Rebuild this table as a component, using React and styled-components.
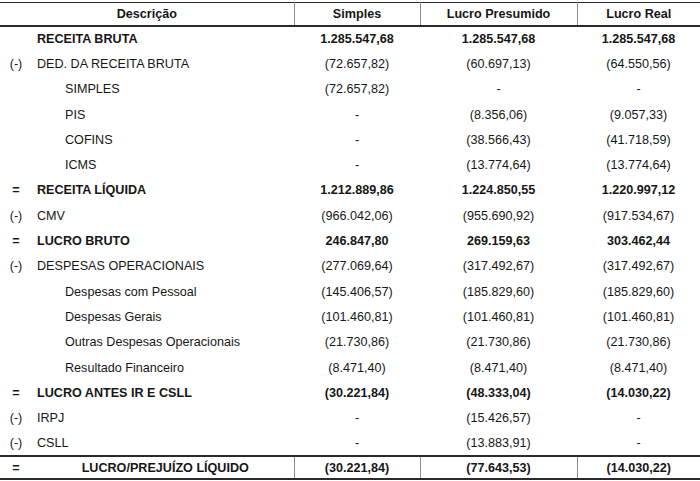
import React from "react";
import styled, { createGlobalStyle } from "styled-components";

const Global = createGlobalStyle`
  html, body { margin: 0; padding: 0; background: #fff; }
  body { font-family: "Liberation Sans", Arial, sans-serif; color: #161616; }
`;

const Page = styled.div`
  width: 700px;
  padding-top: 2px;
`;

const Table = styled.table`
  width: 700px;
  border-collapse: collapse;
  table-layout: fixed;
  font-size: 12.6px;
`;

const HeadRow = styled.tr`
  height: 23px;
  border-top: 1px solid #2a2a2a;
  border-bottom: 2px solid #2a2a2a;
`;

const HeadCell = styled.th`
  font-weight: bold;
  text-align: center;
  padding: 1px 0 0;
  border-left: ${(p) => (p.$sep ? "1px solid #8a8a8a" : "none")};
`;

const Row = styled.tr`
  height: 25.3px;
`;

const TotalRow = styled.tr`
  height: 23px;
  border-top: 2px solid #2a2a2a;
  border-bottom: 2px solid #2a2a2a;
`;

const SignCell = styled.td`
  text-align: center;
  padding: 1px 0 0;
  font-weight: ${(p) => (p.$eq ? "bold" : "normal")};
`;

const DescCell = styled.td`
  padding: 1px 0 0 ${(p) => (p.$indent ? "33px" : "5px")};
  font-weight: ${(p) => (p.$bold ? "bold" : "normal")};
  text-align: ${(p) => (p.$center ? "center" : "left")};
  white-space: nowrap;
`;

const ValueCell = styled.td`
  text-align: center;
  padding: 1px 0 0;
  font-weight: ${(p) => (p.$bold ? "bold" : "normal")};
  border-left: ${(p) => (p.$sep ? "1px solid #8a8a8a" : "none")};
`;

const rows = [
  { sign: "", desc: "RECEITA BRUTA", bold: true, v: ["1.285.547,68", "1.285.547,68", "1.285.547,68"] },
  { sign: "(-)", desc: "DED. DA RECEITA BRUTA", v: ["(72.657,82)", "(60.697,13)", "(64.550,56)"] },
  { sign: "", indent: true, desc: "SIMPLES", v: ["(72.657,82)", "-", "-"] },
  { sign: "", indent: true, desc: "PIS", v: ["-", "(8.356,06)", "(9.057,33)"] },
  { sign: "", indent: true, desc: "COFINS", v: ["-", "(38.566,43)", "(41.718,59)"] },
  { sign: "", indent: true, desc: "ICMS", v: ["-", "(13.774,64)", "(13.774,64)"] },
  { sign: "=", desc: "RECEITA LÍQUIDA", bold: true, v: ["1.212.889,86", "1.224.850,55", "1.220.997,12"] },
  { sign: "(-)", desc: "CMV", v: ["(966.042,06)", "(955.690,92)", "(917.534,67)"] },
  { sign: "=", desc: "LUCRO BRUTO", bold: true, v: ["246.847,80", "269.159,63", "303.462,44"] },
  { sign: "(-)", desc: "DESPESAS OPERACIONAIS", v: ["(277.069,64)", "(317.492,67)", "(317.492,67)"] },
  { sign: "", indent: true, desc: "Despesas com Pessoal", v: ["(145.406,57)", "(185.829,60)", "(185.829,60)"] },
  { sign: "", indent: true, desc: "Despesas Gerais", v: ["(101.460,81)", "(101.460,81)", "(101.460,81)"] },
  { sign: "", indent: true, desc: "Outras Despesas Operacionais", v: ["(21.730,86)", "(21.730,86)", "(21.730,86)"] },
  { sign: "", indent: true, desc: "Resultado Financeiro", v: ["(8.471,40)", "(8.471,40)", "(8.471,40)"] },
  { sign: "=", desc: "LUCRO ANTES IR E CSLL", bold: true, v: ["(30.221,84)", "(48.333,04)", "(14.030,22)"] },
  { sign: "(-)", desc: "IRPJ", v: ["-", "(15.426,57)", "-"] },
  { sign: "(-)", desc: "CSLL", v: ["-", "(13.883,91)", "-"] },
];

export default function App() {
  return (
    <Page>
      <Global />
      <Table>
        <colgroup>
          <col style={{ width: 32 }} />
          <col style={{ width: 262 }} />
          <col style={{ width: 126 }} />
          <col style={{ width: 157 }} />
          <col style={{ width: 123 }} />
        </colgroup>
        <thead>
          <HeadRow>
            <HeadCell colSpan={2}>Descrição</HeadCell>
            <HeadCell $sep>Simples</HeadCell>
            <HeadCell $sep>Lucro Presumido</HeadCell>
            <HeadCell $sep>Lucro Real</HeadCell>
          </HeadRow>
        </thead>
        <tbody>
          {rows.map((r, i) => (
            <Row key={i}>
              <SignCell $eq={r.sign === "="}>{r.sign}</SignCell>
              <DescCell $indent={r.indent} $bold={r.bold}>{r.desc}</DescCell>
              {r.v.map((val, j) => (
                <ValueCell key={j} $bold={r.bold}>{val}</ValueCell>
              ))}
            </Row>
          ))}
          <TotalRow>
            <SignCell $eq>=</SignCell>
            <DescCell $bold $center>LUCRO/PREJUÍZO LÍQUIDO</DescCell>
            <ValueCell $bold $sep>(30.221,84)</ValueCell>
            <ValueCell $bold $sep>(77.643,53)</ValueCell>
            <ValueCell $bold $sep>(14.030,22)</ValueCell>
          </TotalRow>
        </tbody>
      </Table>
    </Page>
  );
}
